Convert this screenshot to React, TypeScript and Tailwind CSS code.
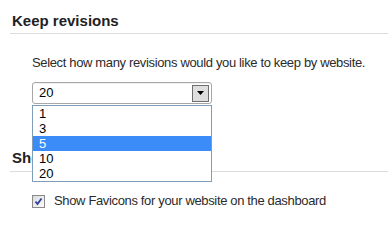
export default function App() {
  const options = ["1", "3", "5", "10", "20"];
  const selected = "5";

  return (
    <div
      className="w-[388px] h-[223px] overflow-hidden bg-white text-[#2b2b2b]"
      style={{ fontFamily: '"Liberation Sans", Arial, sans-serif' }}
    >
      {/* Keep revisions */}
      <section className="pt-[12px]">
        <h2 className="pl-[12px] text-[15px] leading-[18px] font-bold text-[#222]">Keep revisions</h2>
        <div className="ml-[10px] mt-[3px] border-t border-[#dcdcdc]" />
        <div className="pl-[32px]">
          <p className="mt-[21px] text-[13px] leading-[16px] tracking-[-0.35px]">
            Select how many revisions would you like to keep by website.
          </p>
          <div className="relative mt-[11px] w-[180px]">
            <div className="flex h-[22px] items-center justify-between rounded-[3px] border border-[#a7a7a7] bg-white pl-[6px] pr-[2px] shadow-[inset_0_1px_0_#f0f0f0]">
              <span className="text-[13px] leading-[16px] text-black">20</span>
              <span className="flex h-[17px] w-[17px] items-center justify-center border border-[#6e6e6e] bg-[#dedede]">
                <svg width="7" height="4" viewBox="0 0 7 4">
                  <path d="M0 0h7L3.5 4z" fill="#000" />
                </svg>
              </span>
            </div>
            {/* open list */}
            <ul className="absolute left-0 top-[23px] z-10 w-[180px] border border-[#7f9db9] bg-white">
              {options.map((o) => (
                <li
                  key={o}
                  className={
                    o === selected
                      ? "h-[15px] bg-[#3b8cf8] pl-[6px] text-[13px] leading-[15px] text-white"
                      : "h-[15px] pl-[6px] text-[13px] leading-[15px] text-black"
                  }
                >
                  {o}
                </li>
              ))}
            </ul>
          </div>
        </div>
      </section>

      {/* Show favicons */}
      <section className="mt-[45px]">
        <h2 className="pl-[12px] text-[15px] leading-[18px] font-bold text-[#222]">Show Favicons</h2>
        <div className="ml-[10px] mt-[4px] border-t border-[#dcdcdc]" />
        <label className="mt-[21px] flex items-center pl-[32px] text-[13px] leading-[16px] tracking-[-0.35px]">
          <span className="flex h-[13px] w-[13px] items-center justify-center border border-[#8a8a8a] bg-gradient-to-br from-[#dcdcdc] to-[#fbfbfb]">
            <svg width="9" height="9" viewBox="0 0 9 9">
              <path d="M1.5 4.5l2 2.5 4-5.5" fill="none" stroke="#2f3f9e" strokeWidth="1.8" />
            </svg>
          </span>
          <span className="ml-[9px]">Show Favicons for your website on the dashboard</span>
        </label>
      </section>
    </div>
  );
}
